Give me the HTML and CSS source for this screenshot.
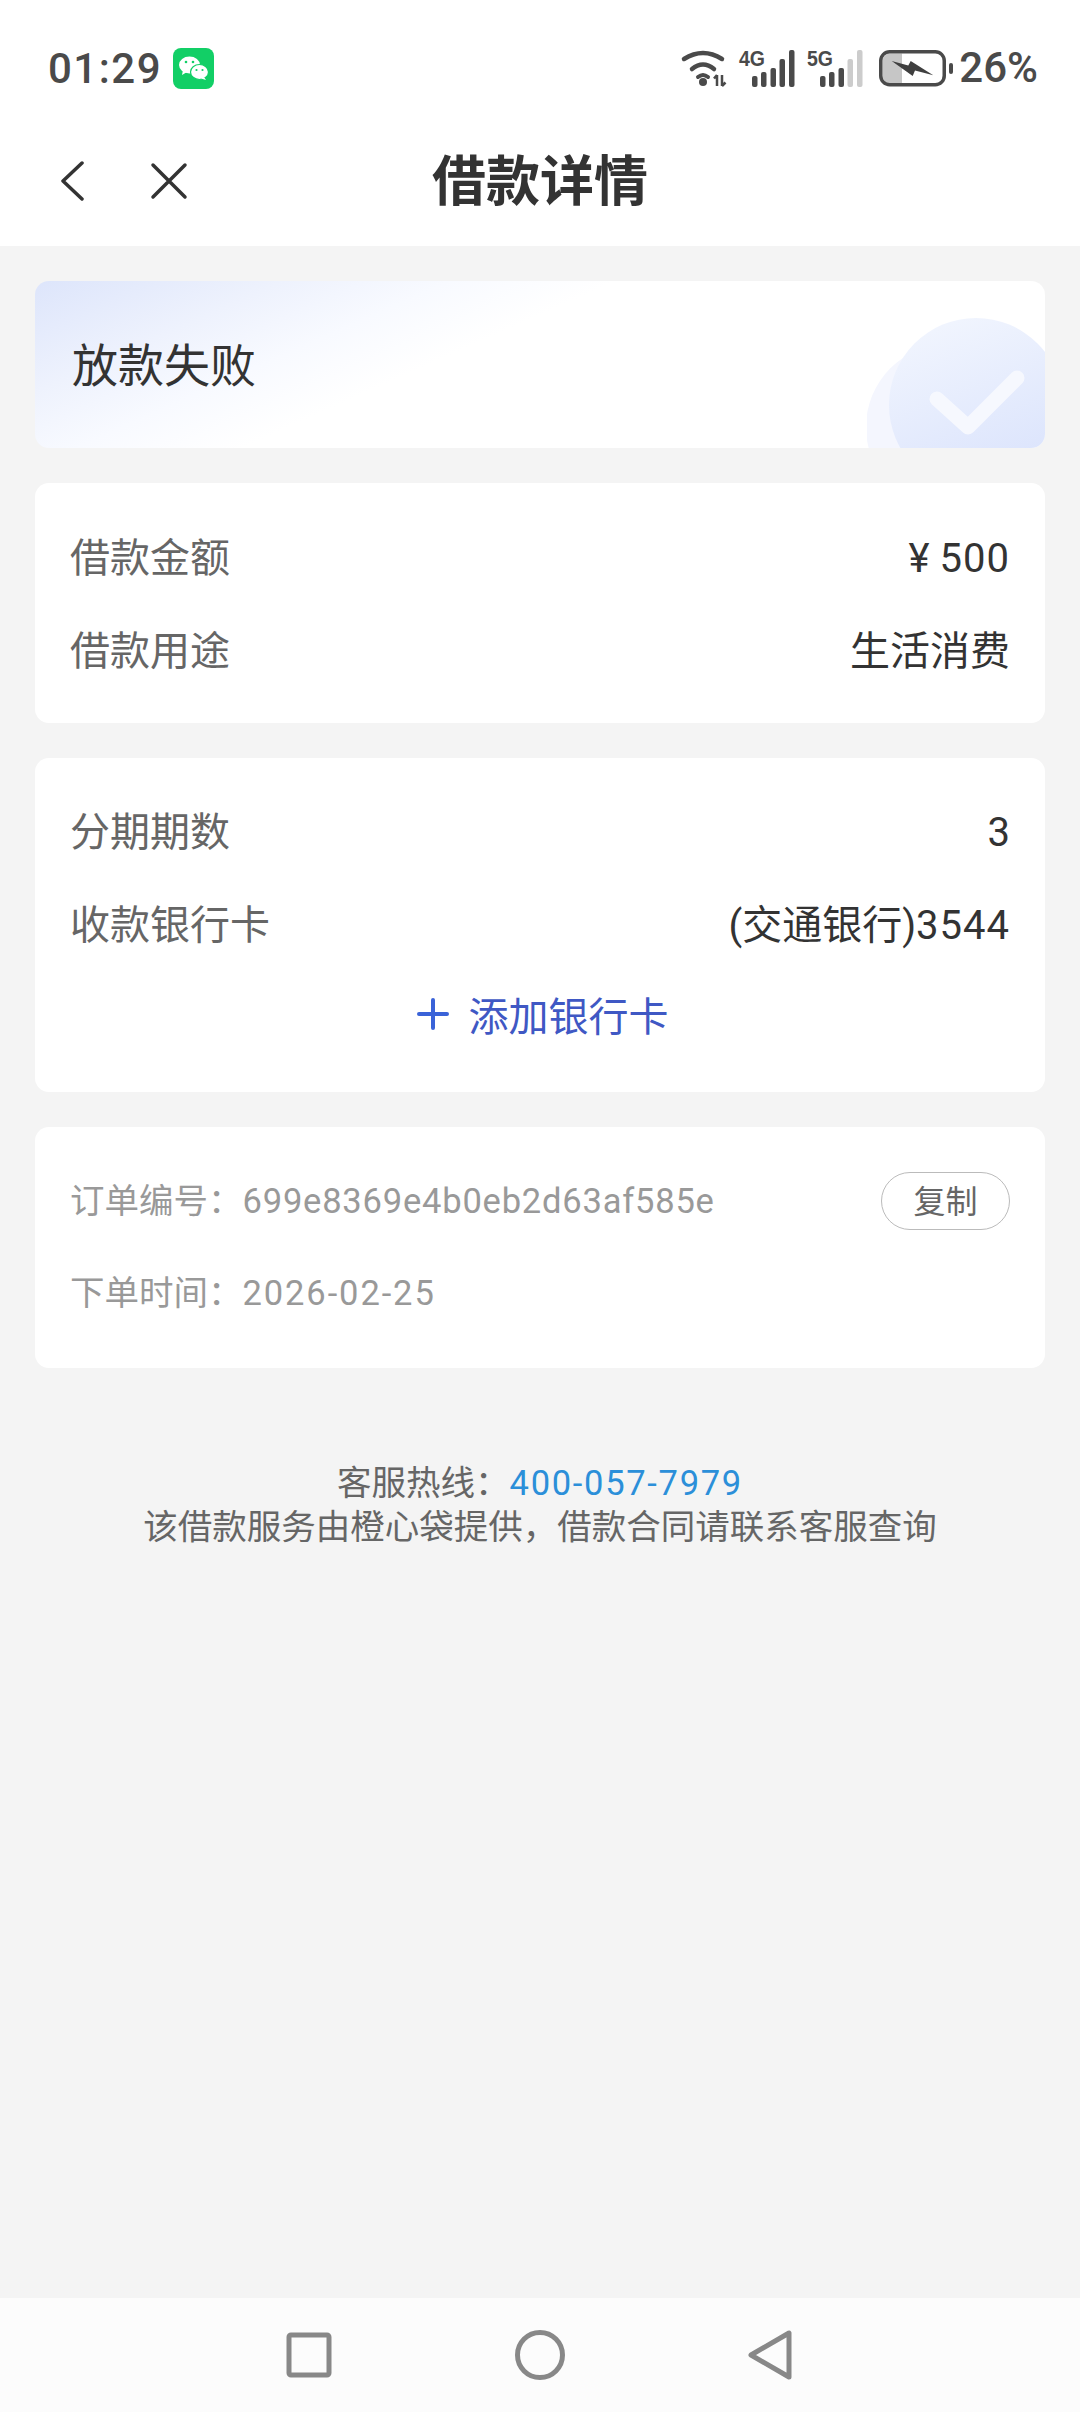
FILE: index.html
```html
<!DOCTYPE html>
<html lang="zh-CN">
<head>
<meta charset="utf-8">
<title>借款详情</title>
<link rel="stylesheet" href="styles.css">
</head>
<body>
<div class="screen">
  <header class="top">
    <div class="status">
      <div class="status-left">
        <span class="time">01:29</span>
        <svg class="wechat" viewBox="0 0 41 41" width="41" height="41">
          <rect width="41" height="41" rx="8" fill="#12cf66"/>
          <ellipse cx="16.5" cy="17" rx="10.5" ry="8.5" fill="#fff"/>
          <path d="M10 22l-1 5 5-3z" fill="#fff"/>
          <ellipse cx="26.5" cy="24" rx="9" ry="7.5" fill="#fff" stroke="#12cf66" stroke-width="1.2"/>
          <path d="M31 29l2 3-5-1.500z" fill="#fff"/>
          <circle cx="13" cy="14" r="1.300" fill="#12cf66"/><circle cx="20" cy="14" r="1.300" fill="#12cf66"/>
          <circle cx="23.500" cy="22" r="1.100" fill="#12cf66"/><circle cx="29.500" cy="22" r="1.100" fill="#12cf66"/>
        </svg>
      </div>
      <div class="status-right">
        <svg class="wifi" viewBox="0 0 46 37" width="46" height="37">
          <g fill="none" stroke="#4a4a4a" stroke-linecap="round">
            <path d="M3 9Q22-3 41 9" stroke-width="4.500"/>
            <path d="M11 19Q22 10 33 19" stroke-width="4.500"/>
            <path d="M17 27Q22 23 27 27" stroke-width="4"/>
          </g>
          <circle cx="22" cy="32" r="4" fill="#4a4a4a"/>
          <path d="M36 25v11M33 28.500l3-3.500M41 25v11M41 36l3.500-3.500" stroke="#4a4a4a" stroke-width="2.500" fill="none"/>
        </svg>
        <svg class="signal" viewBox="0 0 56 37" width="56" height="37">
          <text x="0" y="16" class="net" textLength="26" lengthAdjust="spacingAndGlyphs">4G</text>
          <g fill="#4a4a4a"><rect x="13" y="26" width="5.500" height="11" rx="2"/><rect x="22" y="22" width="5.500" height="15" rx="2"/><rect x="31.500" y="18" width="5.500" height="19" rx="2"/><rect x="40.500" y="9" width="5.500" height="28" rx="2"/><rect x="50" y="0" width="5.500" height="37" rx="2"/></g>
        </svg>
        <svg class="signal" viewBox="0 0 56 37" width="56" height="37">
          <text x="0" y="16" class="net" textLength="26" lengthAdjust="spacingAndGlyphs">5G</text>
          <g fill="#4a4a4a"><rect x="13" y="26" width="5.500" height="11" rx="2"/><rect x="22" y="22" width="5.500" height="15" rx="2"/><rect x="31.500" y="18" width="5.500" height="19" rx="2"/></g>
          <g fill="#cccccc"><rect x="40.500" y="9" width="5.500" height="28" rx="2"/><rect x="50" y="0" width="5.500" height="37" rx="2"/></g>
        </svg>
        <svg class="battery" viewBox="0 0 74 37" width="74" height="37">
          <path d="M3.500 11a7.500 7.500 0 0 1 7.500-7.500h12v30H11a7.500 7.500 0 0 1-7.500-7.500z" fill="#c6c6c6"/>
          <rect x="1.750" y="1.750" width="63.500" height="33" rx="9" fill="none" stroke="#4a4a4a" stroke-width="3.500"/>
          <path d="M12.700 11L29.300 15.500 31.700 11 54.300 25.300 36 20.500 33.700 26z" fill="#3f3f3f"/>
          <rect x="70" y="13" width="4" height="11" rx="2" fill="#4a4a4a"/>
        </svg>
        <span class="percent">26%</span>
      </div>
    </div>
    <nav class="nav">
      <div class="nav-actions">
        <svg viewBox="0 0 24 40" width="24" height="40"><path d="M22 2L3 20l19 18" fill="none" stroke="#333" stroke-width="3.500" stroke-linecap="round" stroke-linejoin="round"/></svg>
        <svg viewBox="0 0 38 38" width="38" height="38"><path d="M3 3l32 32M35 3L3 35" fill="none" stroke="#333" stroke-width="3.500" stroke-linecap="round"/></svg>
      </div>
      <h1 class="title">借款详情</h1>
      <div></div>
    </nav>
  </header>

  <main class="content">
    <section class="card banner">
      <span class="banner-text">放款失败</span>
      <svg class="banner-art" viewBox="0 0 178 167" width="178" height="167">
        <defs>
          <linearGradient id="blob" x1="0.300" y1="0" x2="0.700" y2="1">
            <stop offset="0" stop-color="#f1f5fe"/><stop offset="1" stop-color="#d9e2fc"/>
          </linearGradient>
        </defs>
        <circle cx="82" cy="146" r="83" fill="#f4f6fe"/>
        <circle cx="109" cy="124" r="87" fill="url(#blob)"/>
        <path d="M70 118l31 28 49-49" fill="none" stroke="#f6f8fe" stroke-width="15" stroke-linecap="round" stroke-linejoin="round"/>
      </svg>
    </section>

    <section class="card rows">
      <div class="row"><span class="label">借款金额</span><span class="value">¥ <span class="digits">500</span></span></div>
      <div class="row"><span class="label">借款用途</span><span class="value">生活消费</span></div>
    </section>

    <section class="card rows rows-bank">
      <div class="row"><span class="label">分期期数</span><span class="value">3</span></div>
      <div class="row"><span class="label">收款银行卡</span><span class="value">(交通银行)<span class="digits">3544</span></span></div>
      <div class="add-card">
        <svg viewBox="0 0 32 32" width="32" height="32"><path d="M16 2v28M2 16h28" stroke="#3a63d8" stroke-width="4" stroke-linecap="round"/></svg>
        <span>添加银行卡</span>
      </div>
    </section>

    <section class="card order">
      <div class="order-row">
        <span class="order-text">订单编号：<span class="hex">699e8369e4b0eb2d63af585e</span></span>
        <span class="copy">复制</span>
      </div>
      <div class="order-row"><span class="order-text">下单时间：<span class="date">2026-02-25</span></span></div>
    </section>

    <footer class="service">
      <p>客服热线：<span class="phone">400-057-7979</span></p>
      <p>该借款服务由橙心袋提供，借款合同请联系客服查询</p>
    </footer>
  </main>

  <div class="sysnav">
    <svg viewBox="0 0 46 46" width="46" height="46"><rect x="3" y="3" width="40" height="40" rx="2" fill="none" stroke="#888" stroke-width="5"/></svg>
    <svg viewBox="0 0 50 50" width="50" height="50"><circle cx="25" cy="25" r="22.500" fill="none" stroke="#888" stroke-width="5"/></svg>
    <svg viewBox="0 0 46 50" width="46" height="50"><path d="M41 3v44L3 25z" fill="none" stroke="#888" stroke-width="5" stroke-linejoin="round"/></svg>
  </div>
</div>
</body>
</html>
```
FILE: styles.css
```css
* { box-sizing: border-box; }
html, body { margin: 0; padding: 0; }
body {
  width: 1080px;
  height: 2412px;
  font-family: Roboto, "Noto Sans CJK SC", sans-serif;
  background: #f4f4f4;
  color: #333;
}
p, h1 { margin: 0; font-weight: normal; }
.screen { height: 2412px; display: flex; flex-direction: column; }

.top { background: #fff; height: 246px; }
.status {
  height: 126px;
  padding: 48px 42px 0 48px;
  display: flex;
  justify-content: space-between;
  align-items: flex-start;
}
.status-left { display: flex; align-items: center; gap: 11px; }
.time { font-size: 42px; line-height: 41px; font-weight: 500; color: #4a4a4a; letter-spacing: 1.5px; }
.wechat { display: block; }
.status-right { display: flex; align-items: center; gap: 12px; height: 40px; }
.status-right svg { display: block; overflow: visible; }
.battery { margin-left: 4px; }
.net { font: 700 22px "Liberation Sans", sans-serif; fill: #4a4a4a; }
.percent { font-size: 42px; line-height: 40px; font-weight: 500; color: #4a4a4a; margin-left: -6px; }

.nav {
  height: 110px;
  display: grid;
  grid-template-columns: 1fr auto 1fr;
  align-items: center;
  padding: 0 60px;
}
.nav-actions { display: flex; align-items: center; gap: 66px; }
.nav-actions svg { display: block; }
.title { font-size: 54px; font-weight: 700; color: #333; line-height: 70px; margin-top: 3px; }

.content {
  flex: 1;
  padding: 35px 35px 0;
  display: flex;
  flex-direction: column;
  gap: 35px;
}
.card { background: #fff; border-radius: 14px; }

.banner {
  position: relative;
  overflow: hidden;
  height: 167px;
  flex: none;
  display: flex;
  align-items: center;
  padding: 0 37px;
  background: linear-gradient(156deg, #dde5fb 0%, #eef2fd 18%, #f8faff 30%, #fff 42%);
}
.banner-text { font-size: 46px; line-height: 60px; color: #333; margin-top: 2px; }
.banner-art { position: absolute; right: 0; bottom: 0; display: block; }

.rows { padding: 48px 35px 43px; display: flex; flex-direction: column; gap: 37px; }
.rows-bank { gap: 37px; padding: 47px 35px 50px; }
.row { display: flex; justify-content: space-between; align-items: center; height: 56px; font-size: 40px; line-height: 56px; }
.label { color: #666; }
.value { color: #333; white-space: nowrap; }
.digits { letter-spacing: 1px; }
.add-card {
  height: 56px;
  display: flex;
  justify-content: center;
  align-items: center;
  gap: 20px;
  padding-left: 5px;
  margin-top: -5px;
  font-size: 40px;
  color: #3f58c4;
}
.add-card svg { display: block; }

.order { padding: 45px 35px 45px; display: flex; flex-direction: column; gap: 34px; height: 241px; flex: none; }
.order-row { display: flex; justify-content: space-between; align-items: center; height: 58px; }
.order-text { font-size: 34.5px; color: #999; line-height: 58px; }
.hex { letter-spacing: 0.8px; }
.date { letter-spacing: 1.9px; }
.copy {
  width: 129px;
  height: 58px;
  border: 1px solid #bbb;
  border-radius: 29px;
  display: flex;
  align-items: center;
  justify-content: center;
  padding-bottom: 4px;
  font-size: 32px;
  color: #666;
}

.service { margin-top: 58px; text-align: center; font-size: 34.5px; line-height: 44px; color: #666; }
.phone { color: #2b8fd9; letter-spacing: 1.7px; }

.sysnav {
  height: 114px;
  background: #fcfcfc;
  display: grid;
  grid-template-columns: 46px 50px 46px;
  justify-content: center;
  column-gap: 183px;
  align-items: center;
}
.sysnav svg { display: block; }
```
